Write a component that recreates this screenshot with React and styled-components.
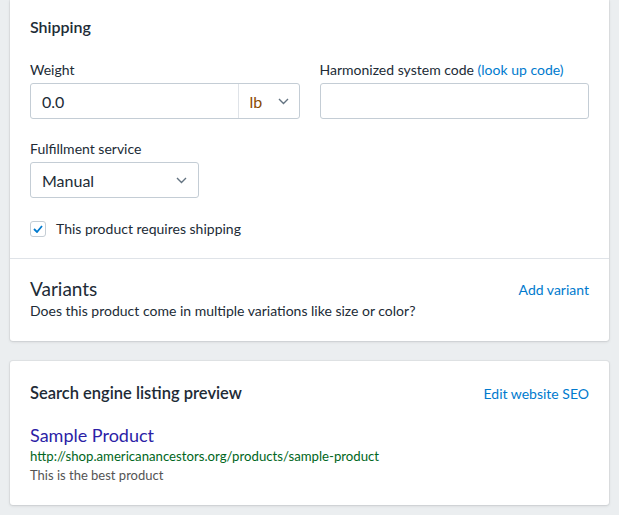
import React from "react";
import styled, { createGlobalStyle } from "styled-components";

const GlobalStyle = createGlobalStyle`
  body {
    margin: 0;
    background: #ebeef0;
    font-family: Lato, "Open Sans", sans-serif;
    color: #212b36;
  }
`;

const Page = styled.div`
  padding: 0 10px 10px;
  display: flex;
  flex-direction: column;
  gap: 20px;
`;

const Card = styled.div`
  background: #fff;
  border-radius: ${(p) => (p.$flatTop ? "0 0 3px 3px" : "3px")};
  box-shadow: 0 0 0 1px rgba(63, 63, 68, 0.05), 0 1px 3px 0 rgba(63, 63, 68, 0.15);
`;

const Section = styled.div`
  padding: ${(p) => p.$pad || "20px"};
  & + & {
    border-top: 1px solid #dfe3e8;
  }
`;

const Heading = styled.h2`
  margin: 0;
  font-size: 16px;
  font-weight: 600;
  line-height: 20px;
`;

const Row = styled.div`
  display: grid;
  grid-template-columns: 1fr 1fr;
  gap: 20px;
  margin-top: 23px;
`;

const Field = styled.div`
  display: flex;
  flex-direction: column;
  gap: 3px;
  margin-top: ${(p) => p.$mt || "0"};
  width: ${(p) => p.$w || "auto"};
`;

const Label = styled.label`
  font-size: 14px;
  line-height: 20px;
`;

const Link = styled.a`
  color: #007ace;
  text-decoration: none;
  font-size: ${(p) => p.$size || "14px"};
`;

const InputBox = styled.div`
  display: flex;
  height: 36px;
  box-sizing: border-box;
  border: 1px solid #c4cdd5;
  border-radius: 3px;
  background: #fff;
  font-size: 16px;
  align-items: center;
`;

const Value = styled.span`
  flex: 1;
  padding: 0 11px;
`;

const Unit = styled.div`
  display: flex;
  align-items: center;
  gap: 16px;
  width: 61px;
  box-sizing: border-box;
  height: 100%;
  padding-left: 11px;
  border-left: 1px solid #dfe3e8;
`;

const UnitText = styled.span`
  color: #8a4b00;
`;

const Chevron = styled.svg`
  width: 11px;
  height: 7px;
  flex: none;
  margin-right: ${(p) => p.$mr || "0"};
`;

const CheckRow = styled.label`
  display: flex;
  align-items: center;
  gap: 10px;
  margin-top: 21px;
  font-size: 14px;
  line-height: 20px;
`;

const Box = styled.span`
  width: 16px;
  height: 16px;
  box-sizing: border-box;
  border: 1px solid #c4cdd5;
  border-radius: 3px;
  display: flex;
  align-items: center;
  justify-content: center;
`;

const HeadRow = styled.div`
  display: flex;
  justify-content: space-between;
  align-items: center;
`;

const Title = styled.h2`
  margin: 0;
  font-size: 19px;
  font-weight: 400;
  line-height: 24px;
`;

const Text = styled.p`
  margin: 0;
  font-size: 14px;
  line-height: 20px;
`;

const SeoTitle = styled.h3`
  margin: 0;
  font-size: 16.5px;
  font-weight: 600;
  line-height: 24px;
`;

const Preview = styled.div`
  margin-top: 18px;
  display: flex;
  flex-direction: column;
`;

const GTitle = styled.div`
  color: #2c1ea6;
  font-size: 18px;
  line-height: 24px;
`;

const GUrl = styled.div`
  color: #006621;
  font-size: 13.2px;
  line-height: 19px;
`;

const GDesc = styled.div`
  color: #545454;
  font-size: 13px;
  line-height: 19px;
`;

const Down = ({ mr }) => (
  <Chevron viewBox="0 0 11 7" $mr={mr}>
    <path d="M1 1l4.5 4.5L10 1" fill="none" stroke="#637381" strokeWidth="1.4" />
  </Chevron>
);

export default function App() {
  return (
    <>
      <GlobalStyle />
      <Page>
        <Card $flatTop>
          <Section $pad="17px 20px 19px">
            <Heading>Shipping</Heading>
            <Row>
              <Field>
                <Label>Weight</Label>
                <InputBox>
                  <Value>0.0</Value>
                  <Unit>
                    <UnitText>lb</UnitText>
                    <Down />
                  </Unit>
                </InputBox>
              </Field>
              <Field>
                <Label>
                  Harmonized system code <Link>(look up code)</Link>
                </Label>
                <InputBox />
              </Field>
            </Row>
            <Field $mt="20px" $w="169px">
              <Label>Fulfillment service</Label>
              <InputBox>
                <Value>Manual</Value>
                <Down mr="11px" />
              </InputBox>
            </Field>
            <CheckRow>
              <Box>
                <svg width="10" height="8" viewBox="0 0 10 8">
                  <path d="M1 4l3 3 5-6" fill="none" stroke="#007ace" strokeWidth="1.8" />
                </svg>
              </Box>
              This product requires shipping
            </CheckRow>
          </Section>
          <Section $pad="18px 20px 20px">
            <HeadRow>
              <Title>Variants</Title>
              <Link>Add variant</Link>
            </HeadRow>
            <Text>Does this product come in multiple variations like size or color?</Text>
          </Section>
        </Card>
        <Card>
          <Section $pad="20px 20px 20px">
            <HeadRow>
              <SeoTitle>Search engine listing preview</SeoTitle>
              <Link>Edit website SEO</Link>
            </HeadRow>
            <Preview>
              <GTitle>Sample Product</GTitle>
              <GUrl>http://shop.americanancestors.org/products/sample-product</GUrl>
              <GDesc>This is the best product</GDesc>
            </Preview>
          </Section>
        </Card>
      </Page>
    </>
  );
}
